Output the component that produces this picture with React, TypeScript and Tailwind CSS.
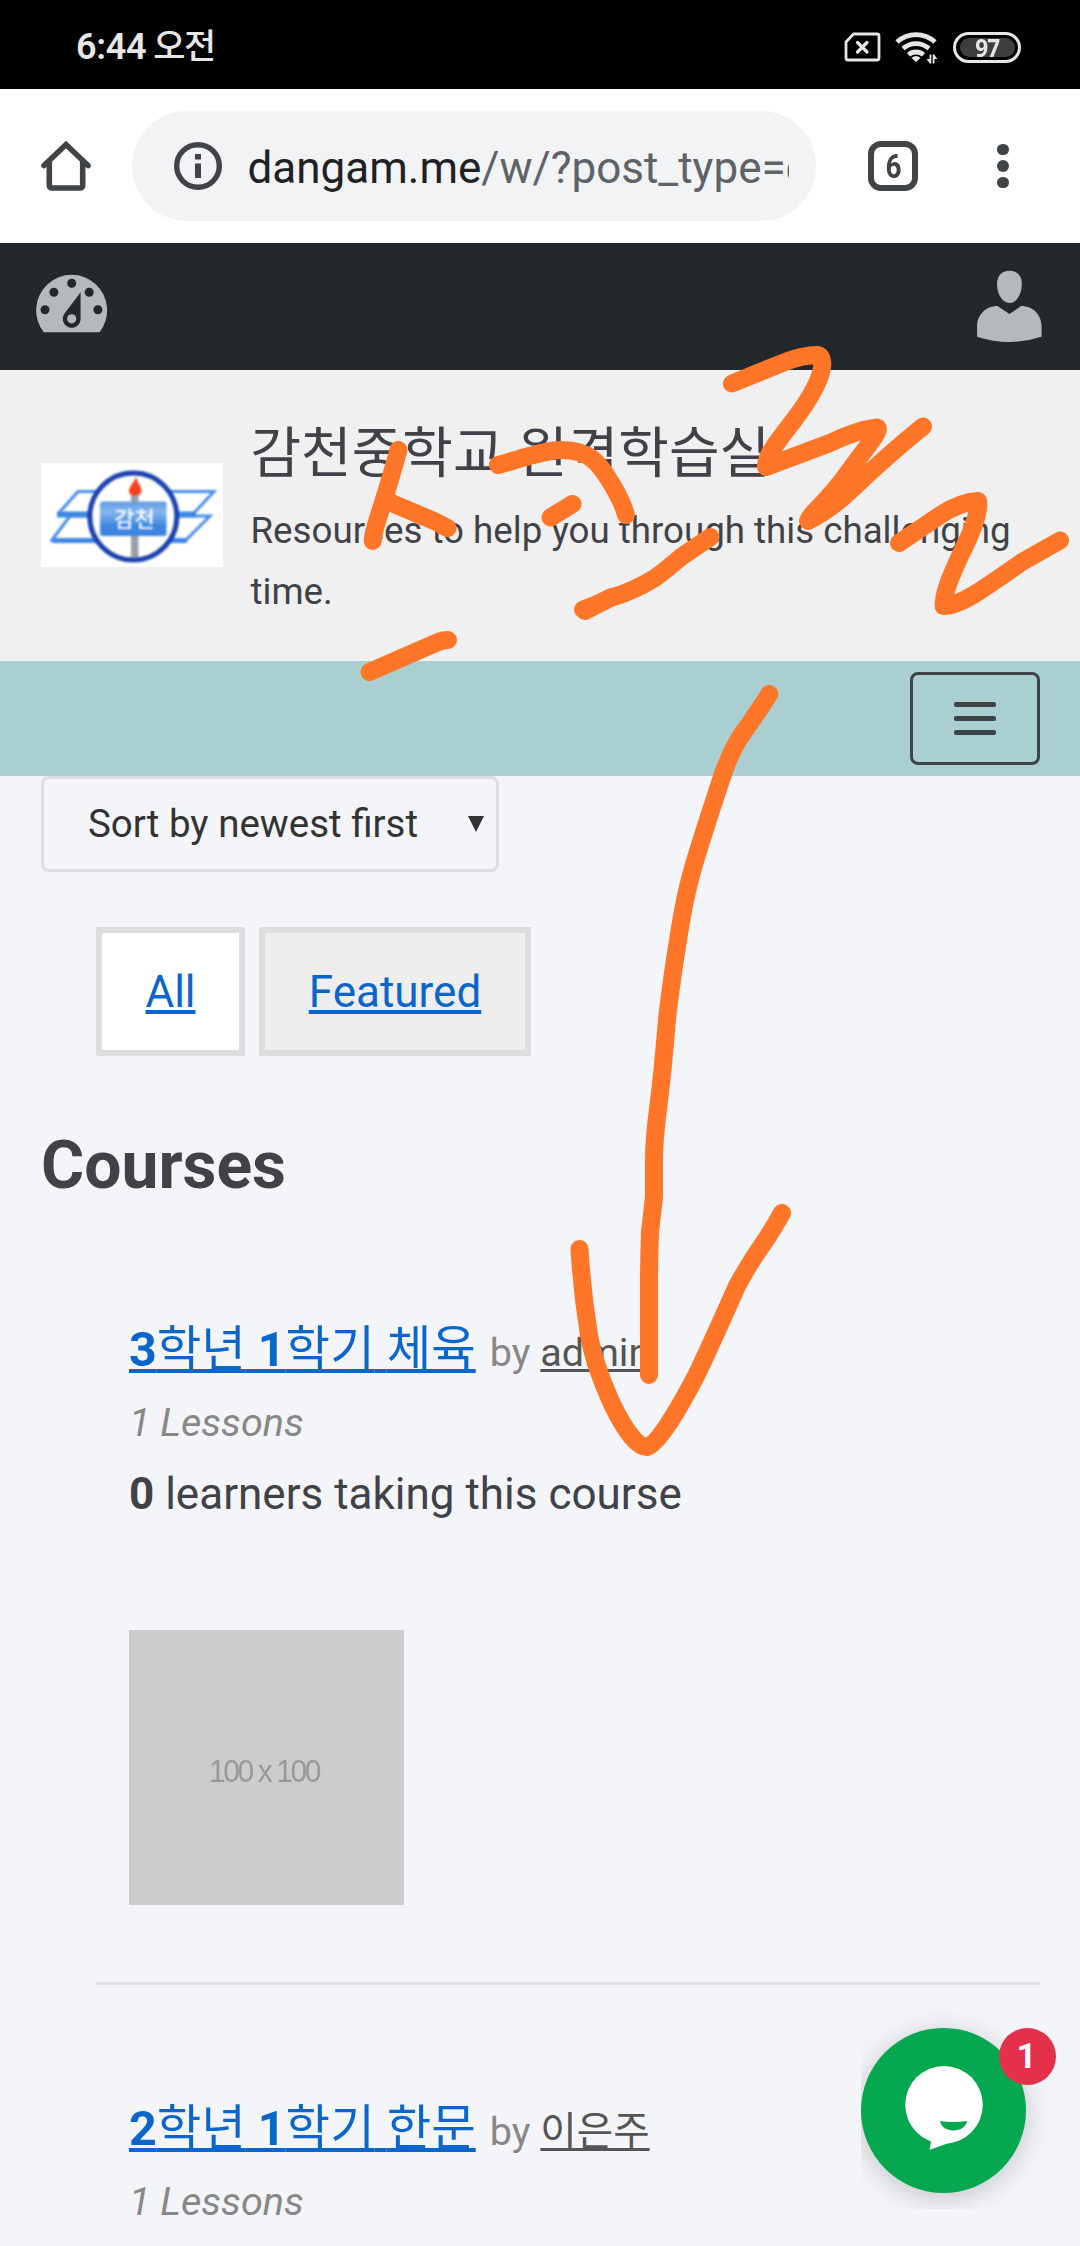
import React from "react";

const KO = "font-['Roboto','Noto_Sans_CJK_KR',sans-serif]";

function StatusBar() {
  return (
    <div className="flex h-[89px] items-center justify-between bg-black pr-[59px] pl-[76px] text-[#e6e6e6]">
      <div className="flex items-baseline gap-[7px] pt-[5px] text-[36px] leading-none">
        <span className="font-semibold tracking-[-0.300px]">6:44</span>
        <span className="text-[35px] font-medium tracking-[-1.500px]">오전</span>
      </div>
      <div className="flex items-center gap-[14px] pt-[5px]">
        <svg width="37" height="30" viewBox="0 0 37 30" fill="none" stroke="#e6e6e6" strokeWidth="2.800" strokeLinejoin="round" strokeLinecap="round">
          <path d="M9.500 2H33a2 2 0 0 1 2 2v22a2 2 0 0 1-2 2H4a2 2 0 0 1-2-2V10z" />
          <path d="M13.500 10.500l9.500 9.500M23 10.500l-9.500 9.500" strokeWidth="3.200" />
        </svg>
        <svg width="44" height="34" viewBox="0 0 44 34" fill="none" stroke="#e6e6e6" strokeWidth="4.800">
          <path d="M2 12a28 28 0 0 1 38 0" />
          <path d="M8 18.500a19.500 19.500 0 0 1 26 0" />
          <path d="M13.500 24.800a11.500 11.500 0 0 1 15 0" />
          <path d="M21 32l-4.500-4q4.500-4 9 0z" fill="#e6e6e6" stroke="none" />
          <path d="M35.400 24.500v9M38.600 33.500v-9" strokeWidth="1.800" />
          <path d="M31.500 29h3.500v4.500zM42.500 29H39v-4.500z" fill="#e6e6e6" stroke="none" />
        </svg>
        <div className="flex h-[31px] w-[68px] items-center justify-center rounded-full border-[3px] border-[#e6e6e6]">
          <div className="flex h-[19px] w-[55px] items-center justify-center rounded-full bg-[#3e3e3e]">
            <span className="scale-x-90 font-['Noto_Sans'] text-[25px] leading-none font-bold tracking-[-1px]">97</span>
          </div>
        </div>
      </div>
    </div>
  );
}

function BrowserBar() {
  return (
    <div className="flex h-[154px] items-center bg-white">
      <svg className="ml-[38px]" width="56" height="56" viewBox="38 138 56 56" fill="none" stroke="#404447" strokeWidth="5.600" strokeLinecap="round">
        <path d="M44 165.500L66 144.500L88 165.500" strokeLinejoin="miter" />
        <path d="M49.300 162V185.500a2.500 2.500 0 0 0 2.500 2.500H80.200a2.500 2.500 0 0 0 2.500-2.500V162" />
      </svg>
      <div className="ml-[38px] flex h-[110px] w-[684px] items-center rounded-full bg-[#f1f3f4] pl-[42px]">
        <svg width="48" height="48" viewBox="0 0 48 48" fill="none">
          <circle cx="24" cy="24" r="21.300" stroke="#404447" strokeWidth="5.400" />
          <path d="M21 12h6v5.500h-6zM21 21.500h6V36h-6z" fill="#404447" />
        </svg>
        <div className="ml-[25.500px] w-[541px] overflow-hidden pt-[4px] text-[44px] leading-[60px] whitespace-nowrap text-[#5f6368]">
          <span className="text-[#202124]">dangam.me</span>/w/?post_type=c
        </div>
      </div>
      <div className="ml-[52px] flex h-[50px] w-[50px] items-center justify-center rounded-[13px] border-[6px] border-[#404447]">
        <span className="scale-x-85 text-[33px] leading-none font-bold text-[#404447]">6</span>
      </div>
      <div className="ml-[79px] flex flex-col gap-[5px]">
        <i className="size-[11.500px] rounded-full bg-[#404447]" />
        <i className="size-[11.500px] rounded-full bg-[#404447]" />
        <i className="size-[11.500px] rounded-full bg-[#404447]" />
      </div>
    </div>
  );
}

function AdminBar() {
  return (
    <div className="flex h-[127px] items-start justify-between bg-[#23282d] pt-[27px] pr-[38px] pl-[36px]">
      <svg className="mt-[4px]" width="72" height="59" viewBox="36 274.500 72 59">
        <path d="M43.700 332.700A35.500 35.500 0 1 1 99.600 332.700z" fill="#b4b9be" />
        <g fill="#23282d">
          <circle cx="45" cy="310.300" r="4.500" />
          <circle cx="53.900" cy="292.700" r="4.500" />
          <circle cx="71.700" cy="283.700" r="4.500" />
          <circle cx="89.200" cy="292.700" r="4.500" />
          <circle cx="97.900" cy="310.300" r="4.500" />
          <path d="M80.600 292.700V319.300a8.900 8.900 0 1 1-16.200-5z" />
        </g>
        <circle cx="71.700" cy="319.300" r="4.600" fill="#b4b9be" />
      </svg>
      <svg width="65" height="74" viewBox="977 270 65 74" fill="#b4b9be">
        <path d="M1009.400 270.700c7.500 0 12.400 5 12.400 13.300 0 9.500-5 19-12.400 19s-12.400-9.500-12.400-19c0-8.300 4.900-13.300 12.400-13.300z" />
        <path d="M997.500 306l11.900 8 11.900-8c12 0 20.300 9 20.300 20.500v10.200q-32.200 10.600-64.500 0V326.500C977.100 315 985.500 306 997.500 306z" />
      </svg>
    </div>
  );
}

function SchoolLogo() {
  return (
    <svg className="mt-[93px] ml-[41px] shrink-0 bg-white" width="182" height="104" viewBox="41 463 182 104">
      <defs>
        <linearGradient id="plate" x1="0" y1="0" x2="0" y2="1">
          <stop offset="0" stopColor="#5f9ae0" />
          <stop offset="0.300" stopColor="#86b6ee" />
          <stop offset="0.700" stopColor="#3f86e0" />
          <stop offset="1" stopColor="#3a84e4" />
        </linearGradient>
      </defs>
      <g className="blur-[0.900px]">
        <g fill="none" stroke="#4a8ce6" strokeWidth="3">
          <path d="M58 514L78 491.500H214L193 514" />
          <path d="M52 540L70 516H210L186 540z" />
        </g>
        <path d="M57 514.500H196" stroke="#3f86e4" strokeWidth="6" />
        <path d="M52 540.500H187" stroke="#3f86e4" strokeWidth="5" />
        <circle cx="133.300" cy="516.500" r="43.500" fill="#fff" stroke="#1b42ae" strokeWidth="5" />
        <path d="M134.700 494V557" stroke="#9a9ea8" strokeWidth="7.500" />
        <path d="M136 477c1 5 5.500 9 5.500 14 0 3-3 4.500-6.500 4.500s-6-1.500-6-4.500c0-5 5.500-9 7-14z" fill="#f8401c" />
        <rect x="100" y="501.500" width="66.500" height="34.500" rx="2.500" fill="url(#plate)" />
        <text x="134.500" y="527" textAnchor="middle" fill="#fff" fontSize="22" fontWeight="500" fontFamily="Noto Sans CJK KR">
          감천
        </text>
      </g>
    </svg>
  );
}

function SiteHeader() {
  return (
    <header className="flex h-[291px] items-start bg-[#f0f0f0] text-[#404248]">
      <SchoolLogo />
      <div className="ml-[27.500px] pt-[50px]">
        <h1 className="text-[55px] leading-[66px] font-normal whitespace-nowrap">감천중학교 원격학습실</h1>
        <p className="mt-[15px] w-[790px] text-[36.700px] leading-[60.700px]">
          Resources to help you through this challenging time.
        </p>
      </div>
    </header>
  );
}

function NavBar() {
  return (
    <nav className="flex h-[115px] items-start justify-end bg-[#a9cfd0] pt-[11px] pr-[40px]">
      <button className="flex h-[93px] w-[130px] flex-col items-center justify-center gap-[9px] rounded-[8px] border-[3px] border-[#3c4448]">
        <i className="h-[5px] w-[42px] rounded-[2px] bg-[#3c4448]" />
        <i className="h-[5px] w-[42px] rounded-[2px] bg-[#3c4448]" />
        <i className="h-[5px] w-[42px] rounded-[2px] bg-[#3c4448]" />
      </button>
    </nav>
  );
}

const LINK = "text-[#0a66cc] underline decoration-[4px] underline-offset-[3px] [text-decoration-skip-ink:none]";

type Course = { title: { text: string; bold: boolean }[]; author: string; learners?: number };

const courses: Course[] = [
  {
    title: [
      { text: "3", bold: true },
      { text: "학년", bold: false },
      { text: " 1", bold: true },
      { text: "학기", bold: false },
      { text: " ", bold: true },
      { text: "체육", bold: false },
    ],
    author: "admin",
    learners: 0,
  },
  {
    title: [
      { text: "2", bold: true },
      { text: "학년", bold: false },
      { text: " 1", bold: true },
      { text: "학기", bold: false },
      { text: " ", bold: true },
      { text: "한문", bold: false },
    ],
    author: "이은주",
  },
];

function CourseItem({ course }: { course: Course }) {
  return (
    <li className="pt-[106px] pl-[33px]">
      <div className="flex h-[76px] items-baseline text-[48.400px] leading-[76px] whitespace-nowrap">
        <a className={LINK}>
          {course.title.map((part, i) => (
            <span key={i} className={part.bold ? "font-bold" : "font-normal"}>
              {part.text}
            </span>
          ))}
        </a>
        <span className="ml-[14px] text-[39.600px] leading-none text-[#888]">
          by{" "}
          <a className="text-[#555] underline decoration-[3px] underline-offset-[3px] [text-decoration-skip-ink:none]">{course.author}</a>
        </span>
      </div>
      <p className="h-[70px] text-[39.600px] leading-[70px] text-[#888] italic">1 Lessons</p>
      {course.learners !== undefined && (
        <>
          <p className="text-[44px] leading-[72px]">
            <b>{course.learners}</b> learners taking this course
          </p>
          <div className="mt-[100px] flex size-[275px] items-center justify-center bg-[#ccc] pt-[6px] pr-[5px]">
            <span className="scale-y-105 font-['Liberation_Sans'] text-[30px] tracking-[-2.400px] text-[#999] blur-[0.600px]">100 x 100</span>
          </div>
          <div className="mt-[77px] -ml-[33px] h-[3px] bg-[#e1e3e4]" />
        </>
      )}
    </li>
  );
}

function ChatButton() {
  return (
    <div className="absolute top-[1988px] left-[861px] h-[221px] w-[219px] overflow-hidden pt-[40px]">
      <button className="relative block size-[165px] rounded-full bg-[#05a84e] shadow-[0_5px_28px_rgba(0,0,0,0.2)]">
        <svg width="165" height="165" viewBox="861 2028 165 165">
          <circle cx="944" cy="2104.800" r="38.800" fill="#fff" />
          <path d="M931.500 2138L929.700 2149.800L962 2138.500z" fill="#fff" />
          <path d="M940 2121q13.300 2 27 0c-1 6-6.500 9.500-13.500 9.500s-12.500-3.500-13.500-9.500z" fill="#05a84e" />
        </svg>
        <span className="absolute top-0 left-[138px] flex size-[57px] items-center justify-center rounded-full bg-[#e5304c] pr-[2px] text-[35px] leading-none font-bold text-white">
          1
        </span>
      </button>
    </div>
  );
}

/* Freehand marker drawing laid over the page. */
function Scribble() {
  return (
    <svg className="pointer-events-none absolute top-0 left-0" width="1080" height="2246" viewBox="0 0 1080 2246" fill="none" stroke="#ff7628" strokeWidth="18" strokeLinecap="round" strokeLinejoin="round">
      <path d="M398.400 450C393 470 387 490 382 506C377 522 373 531 372.700 541" />
      <path d="M389 502L434 521C439 523 443 526 447.500 528" />
      <path d="M369.500 672L437 642.500Q443 640 448 640" />
      <path d="M498 465C520 459 545 450 562 450C590 450 599 464 608 478Q622 500 626 515" />
      <path d="M550.500 517.500L572.500 504" />
      <path d="M583 609.500Q597 605 610 598Q632 592 655 578Q666 570 681 557L710.500 537" />
      <path d="M585 611L612 597" />
      <path d="M732 383.500L785 362Q803 355 817 355C824 356 823 366 820 376C812 398 794 420 781 437C772 449 766 458 766 467L830 443Q857 430 877 427.500C882 430 864 450 850 470Q836 490 818 508Q808 518 808 521Q830 510 850 491Q890 453 923 426.500" />
      <path d="M899 543L942 514Q961 502 978 501C980 515 968 540 960 556C950 578 944 592 943.500 606Q955 606 975 594Q995 581 1022 562L1060 540.500" />
      <path d="M769.300 694Q758 712 743 733Q730 751 720 783Q710 813 699 848Q688 882 682 916Q672 975 667 1019Q663 1070 658 1109Q654 1140 654 1160V1197L650 1232Q649 1260 649 1285V1375" />
      <path d="M579.500 1249Q582 1292 589 1335Q594 1364 612 1404Q633 1447 647 1447Q661 1443 697 1374Q714 1338 737 1286Q750 1262 765 1241Q773 1229 782 1213" />
    </svg>
  );
}

export default function App() {
  return (
    <div className={`relative h-[2246px] w-[1080px] overflow-hidden bg-[#f4f5f9] text-[#404248] ${KO}`}>
      <StatusBar />
      <BrowserBar />
      <AdminBar />
      <SiteHeader />
      <NavBar />
      <main className="pr-[40px] pl-[41px]">
        <div className="flex h-[96px] w-[458px] items-center justify-between rounded-[8px] border-[3px] border-[#ddd] pr-[12px] pl-[44px] text-[38.500px] leading-none text-[#333]">
          <span>Sort by newest first</span>
          <svg width="16" height="16" viewBox="0 0 16 16" fill="#333">
            <path d="M0 0h16L8 16z" />
          </svg>
        </div>
        <div className="mt-[55px] ml-[55px] flex gap-[14px] text-[44px]">
          <div className="flex h-[129px] w-[149px] items-center justify-center border-[6px] border-[#ddd] bg-white">
            <a className={LINK}>All</a>
          </div>
          <div className="flex h-[129px] w-[272px] items-center justify-center border-[6px] border-[#ddd] bg-[#eee]">
            <a className={LINK}>Featured</a>
          </div>
        </div>
        <h2 className="mt-[70px] text-[66px] leading-[80px] font-bold">Courses</h2>
        <ul className="ml-[55px]">
          {courses.map((course) => (
            <CourseItem key={course.author} course={course} />
          ))}
        </ul>
      </main>
      <ChatButton />
      <Scribble />
    </div>
  );
}
